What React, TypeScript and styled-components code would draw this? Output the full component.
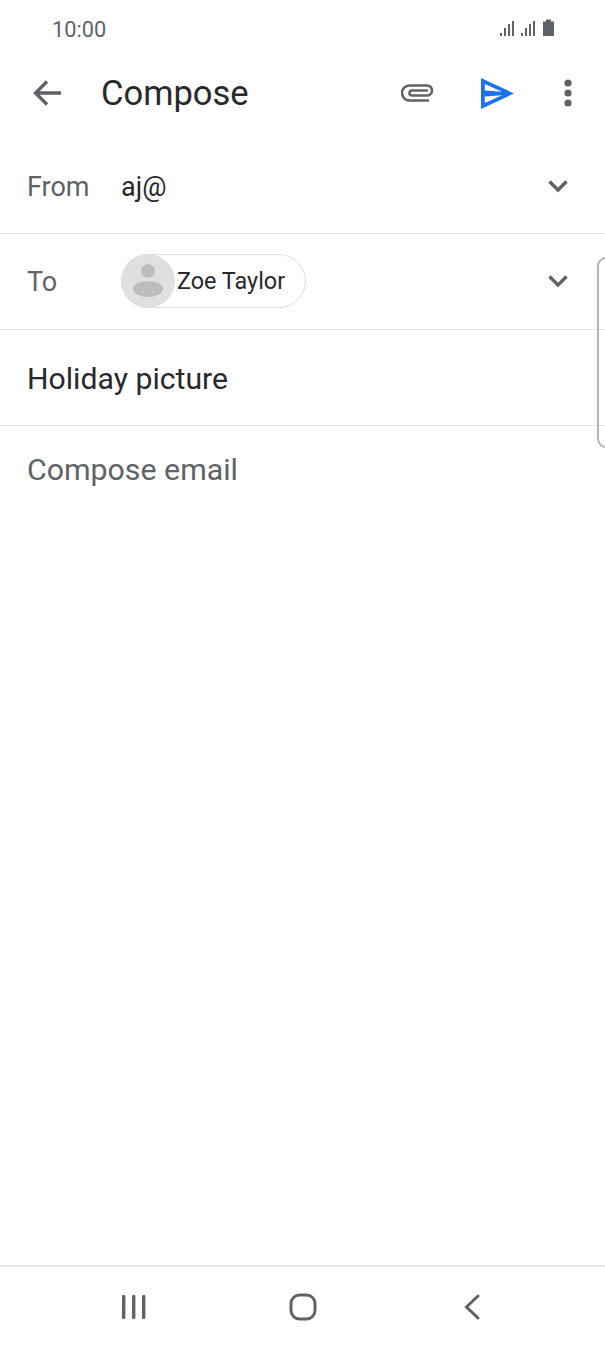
import React from 'react';
import styled, { createGlobalStyle } from 'styled-components';

const GlobalStyle = createGlobalStyle`
    html, body {
        margin: 0;
        padding: 0;
        background: #ffffff;
    }
    * {
        box-sizing: border-box;
    }
`;

const Screen = styled.div`
    position: relative;
    display: flex;
    flex-direction: column;
    width: 605px;
    height: 1346px;
    overflow: hidden;
    background: #ffffff;
    font-family: Roboto, 'Liberation Sans', sans-serif;
    color: #202124;
`;

const StatusBar = styled.div`
    display: flex;
    align-items: center;
    justify-content: space-between;
    height: 58px;
    padding: 0 50px 0 52px;
    color: #5f6368;
    font-size: 21.8px;
`;

const AppBar = styled.div`
    display: flex;
    align-items: center;
    height: 70px;
    padding: 0 33px 0 33px;
`;

const Title = styled.div`
    flex: 1;
    margin-left: 40px;
    font-size: 34.5px;
    line-height: 40px;
    color: #28292c;
`;

const AppBarIcon = styled.svg<{ $gap: number }>`
    display: block;
    margin-left: ${p => p.$gap}px;
`;

const BackIcon = styled.svg`
    display: block;
`;

const Fields = styled.div`
    display: flex;
    flex-direction: column;
    padding-top: 12px;
`;

const Row = styled.div<{ $height: number }>`
    display: flex;
    align-items: center;
    height: ${p => p.$height}px;
    padding: 0 36px 0 27px;
    border-bottom: 1px solid #e4e5e6;
`;

const Label = styled.div<{ $drop?: number }>`
    width: 94px;
    margin-top: ${p => p.$drop ?? 0}px;
    font-size: 27px;
    color: #5f6368;
`;

const Value = styled.div`
    flex: 1;
    font-size: 27px;
    color: #28292c;
`;

const Subject = styled.div`
    margin-top: 2px;
    font-size: 30.2px;
    color: #28292c;
`;

const ChipSlot = styled.div`
    flex: 1;
    display: flex;
    margin-bottom: 1px;
`;

const Chip = styled.div`
    display: flex;
    align-items: center;
    width: 185px;
    height: 54px;
    border: 1px solid #dcdddf;
    border-radius: 27px;
`;

const Avatar = styled.svg`
    display: block;
    margin-left: -1px;
    flex-shrink: 0;
`;

const ChipName = styled.div`
    margin-left: 2px;
    font-size: 23.4px;
    color: #28292c;
`;

const BodyPlaceholder = styled.div`
    padding: 25px 27px 0;
    font-size: 30.3px;
    line-height: 38px;
    color: #5f6368;
`;

const Spacer = styled.div`
    flex: 1;
`;

const EdgeHandle = styled.div`
    position: absolute;
    top: 257px;
    left: 597px;
    width: 20px;
    height: 191px;
    border: 2px solid #b4b5b6;
    border-radius: 9px;
`;

const NavBar = styled.div`
    display: flex;
    align-items: center;
    justify-content: space-between;
    height: 81px;
    padding: 0 124px 0 121px;
    border-top: 2px solid #e6e6e6;
`;

const NavIcon = styled.svg`
    display: block;
`;

const HomeIcon = styled(NavIcon)`
    margin-right: 4px;
`;

const ChevronIcon = styled.svg`
    display: block;
    margin-bottom: 2px;
`;

const Chevron: React.FC = () => (
    <ChevronIcon width="22" height="14" viewBox="0 0 22 14" fill="none">
        <path d="M2.5 2.5 L11 11 L19.5 2.5" stroke="#5f6368" strokeWidth="3.4" />
    </ChevronIcon>
);

const SIGNAL_BARS = [
    { x: 1, y: 14 },
    { x: 5, y: 9 },
    { x: 9, y: 5 },
    { x: 13, y: 2 },
    { x: 22, y: 14 },
    { x: 26, y: 9 },
    { x: 30, y: 5 },
    { x: 34, y: 2 },
];

export default function App() {
    return (
        <Screen>
            <GlobalStyle />
            <StatusBar>
                <span>10:00</span>
                <svg width="56" height="20" viewBox="0 0 56 20" fill="#5f6368">
                    {SIGNAL_BARS.map(bar => (
                        <rect key={bar.x} x={bar.x} y={bar.y} width="2" height={17 - bar.y} />
                    ))}
                    <path d="M44 2.5 H47 V0.5 H52 V2.5 H55 V17 H44 Z" />
                </svg>
            </StatusBar>
            <AppBar>
                <BackIcon width="28" height="26" viewBox="0 0 28 26" fill="none">
                    <path d="M28 13 H3 M14 1.5 L2.5 13 L14 24.5" stroke="#5f6368" strokeWidth="3.4" />
                </BackIcon>
                <Title>Compose</Title>
                <AppBarIcon $gap={0} width="33" height="18" viewBox="0 0 33 18" fill="none">
                    <path
                        d="M28 16.5 H8.5 A7.5 7.5 0 0 1 8.5 1.5 H26 A5 5 0 0 1 26 11.5 H11 A2.5 2.5 0 0 1 11 6.5 H27"
                        stroke="#5f6368"
                        strokeWidth="2.6"
                    />
                </AppBarIcon>
                <AppBarIcon $gap={47} width="33" height="31" viewBox="0 0 33 31" fill="#1a73e8">
                    <path
                        fillRule="evenodd"
                        d="M0 0 L33 15.5 L0 31 Z M3.8 6 L21 13.8 L3.8 12.6 Z M3.8 18.4 L21 17.2 L3.8 25 Z"
                    />
                </AppBarIcon>
                <AppBarIcon $gap={50} width="8" height="28" viewBox="0 0 8 28" fill="#5f6368">
                    <circle cx="4" cy="4" r="3.6" />
                    <circle cx="4" cy="14" r="3.6" />
                    <circle cx="4" cy="24" r="3.6" />
                </AppBarIcon>
            </AppBar>
            <Fields>
                <Row $height={94}>
                    <Label>From</Label>
                    <Value>aj@</Value>
                    <Chevron />
                </Row>
                <Row $height={96}>
                    <Label $drop={1}>To</Label>
                    <ChipSlot>
                        <Chip>
                            <Avatar width="54" height="54" viewBox="0 0 54 54">
                                <circle cx="27" cy="27" r="27" fill="#e0e0e0" />
                                <circle cx="27" cy="17" r="7" fill="#bdbdbd" />
                                <ellipse cx="27" cy="35" rx="15" ry="8" fill="#bdbdbd" />
                            </Avatar>
                            <ChipName>Zoe Taylor</ChipName>
                        </Chip>
                    </ChipSlot>
                    <Chevron />
                </Row>
                <Row $height={96}>
                    <Subject>Holiday picture</Subject>
                </Row>
            </Fields>
            <BodyPlaceholder>Compose email</BodyPlaceholder>
            <Spacer />
            <NavBar>
                <NavIcon width="26" height="26" viewBox="0 0 26 26" fill="#5f6368">
                    <rect x="1" y="1" width="3.4" height="24" rx="1.2" />
                    <rect x="11" y="1" width="3.4" height="24" rx="1.2" />
                    <rect x="21" y="1" width="3.4" height="24" rx="1.2" />
                </NavIcon>
                <HomeIcon width="28" height="28" viewBox="0 0 28 28" fill="none">
                    <rect x="2" y="2" width="24" height="24" rx="8.5" stroke="#5f6368" strokeWidth="3" />
                </HomeIcon>
                <NavIcon width="18" height="26" viewBox="0 0 18 26" fill="none">
                    <path d="M15 2 L3.5 13 L15 24" stroke="#5f6368" strokeWidth="3" strokeLinecap="round" />
                </NavIcon>
            </NavBar>
            <EdgeHandle />
        </Screen>
    );
}
